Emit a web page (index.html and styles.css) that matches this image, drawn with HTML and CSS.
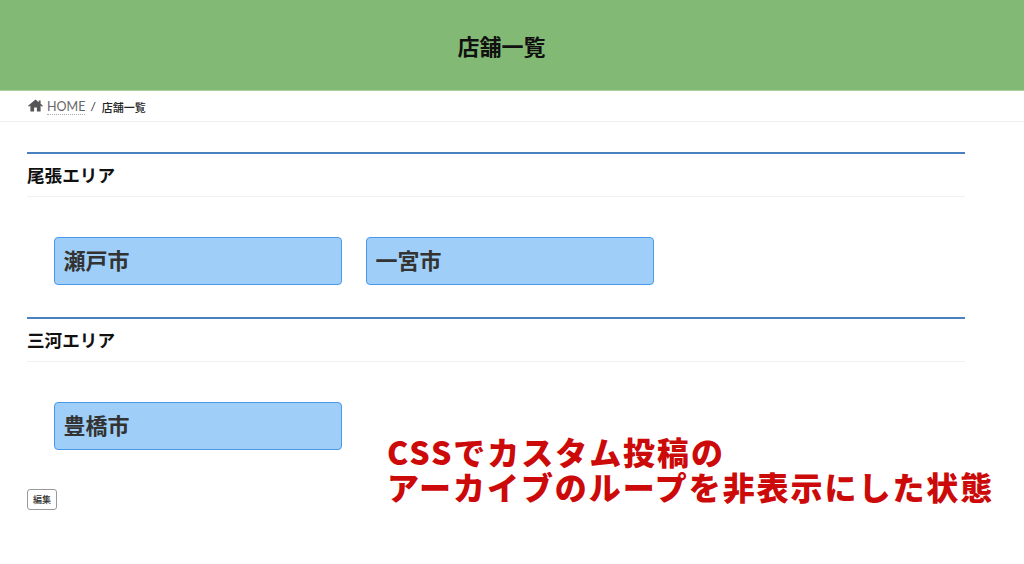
FILE: index.html
```html
<!DOCTYPE html>
<html lang="ja">
<head>
    <meta charset="UTF-8">
    <meta name="viewport" content="width=device-width, initial-scale=1.0">
    <title>店舗一覧</title>
    <link rel="stylesheet" href="styles.css">
</head>
<body>
    <div class="header">
        <h1>店舗一覧</h1>
    </div>

    <div class="breadcrumb">
        <svg class="home-icon" viewBox="0 0 16 14"><path d="M8 .5 0 7.4l.9 1L2.500 7v6.500h4V9.200h3v4.300h4V7l1.600 1.400.9-1-2.500-2.200V1.500h-2v2z"/></svg>
        <a class="home-link">HOME</a>
        <span class="sep">/</span>
        <span class="current">店舗一覧</span>
    </div>

    <div class="content">
        <h2 class="area-title">尾張エリア</h2>
        <div class="city-list">
            <div class="city">瀬戸市</div>
            <div class="city">一宮市</div>
        </div>

        <h2 class="area-title">三河エリア</h2>
        <div class="city-list">
            <div class="city">豊橋市</div>
        </div>

        <a class="edit-btn">編集</a>
    </div>

    <div class="note">CSSでカスタム投稿の<br>アーカイブのループを非表示にした状態</div>
</body>
</html>
```

FILE: styles.css
```css
* {
    margin: 0;
    padding: 0;
    box-sizing: border-box;
}

body {
    font-family: 'Noto Sans CJK JP', 'Noto Sans', sans-serif;
    background: white;
    color: #222;
    height: 564px;
    overflow: hidden;
    position: relative;
}

.header {
    height: 91px;
    padding-right: 21px;
    background: #82b974;
    border-bottom: 1px solid #a9d09d;
    display: flex;
    align-items: center;
    justify-content: center;
}

.header h1 {
    font-size: 22px;
    font-weight: 700;
    color: #111;
    line-height: 1;
}

.breadcrumb {
    height: 31px;
    padding-left: 28px;
    border-bottom: 1px solid #eee;
    display: flex;
    align-items: center;
}

.home-icon {
    width: 15px;
    height: 13px;
    fill: #555;
    margin-right: 4px;
    margin-top: -2px;
}

.home-link {
    font-family: Lato, sans-serif;
    font-size: 12.5px;
    color: #666;
    line-height: 14px;
    margin-top: 2px;
    border-bottom: 1px dotted #aaa;
}

.sep {
    font-family: Lato, sans-serif;
    font-size: 12px;
    margin: 0 6px 0 5px;
    color: #222;
}

.current {
    font-size: 11px;
    font-weight: 500;
    color: #222;
    margin-top: 2px;
}

.content {
    width: 938px;
    margin-left: 27px;
    padding-top: 30px;
}

.area-title {
    height: 45px;
    border-top: 2px solid #4a7fc0;
    border-bottom: 1px solid #f0f0f0;
    font-size: 17.6px;
    font-weight: 700;
    color: #111;
    line-height: 41px;
}

.city-list {
    display: flex;
    gap: 24px;
    padding: 40px 0 32px 27px;
}

.city {
    width: 288px;
    height: 48px;
    background: #9fcff8;
    border: 1px solid #4a98ea;
    border-radius: 4px;
    padding-left: 8.500px;
    font-size: 22px;
    font-weight: 700;
    line-height: 43px;
    color: #333;
}

.edit-btn {
    display: block;
    width: 30px;
    height: 21px;
    margin-top: 7px;
    border: 1px solid #999;
    border-radius: 3px;
    font-size: 9px;
    font-weight: 500;
    line-height: 19px;
    text-align: center;
    color: #333;
}

.note {
    position: absolute;
    left: 387px;
    top: 434px;
    font-size: 32px;
    font-weight: 900;
    line-height: 35px;
    letter-spacing: 1.95px;
    color: #cc0a0a;
    white-space: nowrap;
}
```
